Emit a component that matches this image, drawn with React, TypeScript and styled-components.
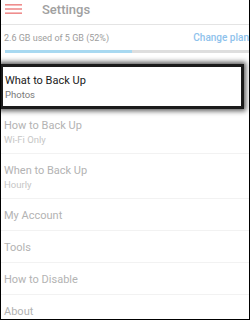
import React from "react";
import styled, { createGlobalStyle } from "styled-components";

const Global = createGlobalStyle`
  html, body { margin: 0; padding: 0; background: #fff; }
  body { font-family: Roboto, "Noto Sans", Arial, sans-serif; }
`;

const Frame = styled.div`
  width: 250px;
  height: 320px;
  box-sizing: border-box;
  border-left: 1px solid #000;
  border-right: 1px solid #000;
  border-bottom: 1px solid #000;
  overflow: hidden;
  background: #fff;
  display: flex;
  flex-direction: column;
`;

const Header = styled.div`
  height: 25px;
  flex: none;
  border-bottom: 1px solid #e4e4e4;
  display: flex;
  align-items: flex-start;
  padding: 2px 0 0 4px;
  box-sizing: border-box;
  gap: 20px;
`;

const Menu = styled.svg`
  width: 17px;
  height: 11px;
  margin-top: 2px;
  flex: none;
`;

const Title = styled.div`
  font-size: 13px;
  line-height: 15px;
  color: #a0a0a0;
  font-weight: 500;
`;

const Storage = styled.div`
  padding: 7px 0 0 3px;
  flex: none;
`;

const StorageRow = styled.div`
  display: flex;
  justify-content: space-between;
  align-items: baseline;
`;

const StorageText = styled.span`
  font-size: 9px;
  line-height: 11px;
  color: #9d9d9d;
`;

const ChangePlan = styled.span`
  font-size: 10px;
  line-height: 11px;
  color: #8ec2ec;
  font-weight: 500;
  white-space: nowrap;
`;

const Track = styled.div`
  margin: 6px 0 0 1px;
  height: 3px;
  background: #dedede;
`;

const Fill = styled.div`
  height: 100%;
  background: #a8d9f1;
`;

const List = styled.div`
  margin-top: 11px;
  display: flex;
  flex-direction: column;
`;

const Item = styled.div<{ $highlight?: boolean }>`
  padding: ${(p) => (p.$highlight ? "7px 1px 5px 2px" : "10px 3px 7px 3px")};
  border-bottom: 1px solid #f2f2f2;
  ${(p) =>
    p.$highlight &&
    `
    border: 3px solid #1b1b1b;
    margin: 0 5px 0 -1px;
    box-shadow: 0 0 5px 2px rgba(0,0,0,0.65);
    position: relative;
    z-index: 1;
  `}
`;

const ItemTitle = styled.div<{ $highlight?: boolean }>`
  font-size: 11px;
  line-height: 14px;
  color: ${(p) => (p.$highlight ? "#1a1a1a" : "#b3b3b3")};
`;

const ItemSub = styled.div<{ $highlight?: boolean }>`
  font-size: 9.5px;
  line-height: 13px;
  color: ${(p) => (p.$highlight ? "#7a7a7a" : "#c6c6c6")};
`;

const items: { title: string; sub?: string; highlight?: boolean }[] = [
  { title: "What to Back Up", sub: "Photos", highlight: true },
  { title: "How to Back Up", sub: "Wi-Fi Only" },
  { title: "When to Back Up", sub: "Hourly" },
  { title: "My Account" },
  { title: "Tools" },
  { title: "How to Disable" },
  { title: "About" },
];

export default function App() {
  const used = 52;
  return (
    <>
      <Global />
      <Frame>
        <Header>
          <Menu viewBox="0 0 17 11">
            <rect x="0" y="0" width="17" height="1.6" fill="#ef8d8d" />
            <rect x="0" y="4.2" width="17" height="1.6" fill="#ef8d8d" />
            <rect x="0" y="8.4" width="17" height="1.6" fill="#ef8d8d" />
          </Menu>
          <Title>Settings</Title>
        </Header>
        <Storage>
          <StorageRow>
            <StorageText>2.6 GB used of 5 GB (52%)</StorageText>
            <ChangePlan>Change plan</ChangePlan>
          </StorageRow>
          <Track>
            <Fill style={{ width: `${used}%` }} />
          </Track>
        </Storage>
        <List>
          {items.map((it) => (
            <Item key={it.title} $highlight={it.highlight}>
              <ItemTitle $highlight={it.highlight}>{it.title}</ItemTitle>
              {it.sub && <ItemSub $highlight={it.highlight}>{it.sub}</ItemSub>}
            </Item>
          ))}
        </List>
      </Frame>
    </>
  );
}
